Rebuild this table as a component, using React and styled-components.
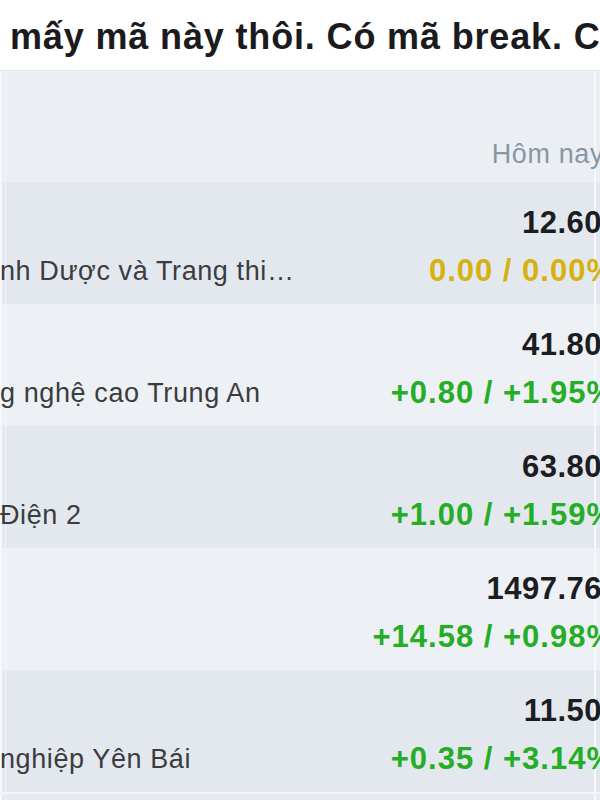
import React from "react";
import styled, { createGlobalStyle, css } from "styled-components";

const GlobalStyle = createGlobalStyle`
  html, body {
    margin: 0;
    padding: 0;
    background: #ffffff;
  }
  body {
    font-family: "Liberation Sans", Arial, Helvetica, sans-serif;
    -webkit-font-smoothing: antialiased;
  }
`;

const Frame = styled.div`
  width: 600px;
  height: 800px;
  overflow: hidden;
  background: #ffffff;
`;

const PostText = styled.div`
  height: 71px;
  box-sizing: border-box;
  display: flex;
  align-items: center;
  padding: 4px 0 0 10px;
  font-size: 36px;
  font-weight: 700;
  color: #1b1b1d;
  white-space: nowrap;
  letter-spacing: 0.85px;
  border-bottom: 1px solid #e2e6eb;
`;

const Table = styled.div`
  width: calc(100% + 16px);
  background: #e6ebf1;
`;

const edgeLines = css`
  background-image:
    linear-gradient(90deg, #f6f8fb 0 2px, transparent 2px 5px, #f1f4f8 5px 6px, transparent 6px),
    linear-gradient(270deg, transparent 0 20px, #f6f8fa 20px 22px, transparent 22px);
`;

const HeaderRow = styled.div`
  ${edgeLines};
  background-color: #ebeff4;
  height: 111px;
  box-sizing: border-box;
  display: flex;
  justify-content: flex-end;
  align-items: flex-end;
  padding: 0 12px 12px 0;
`;

const HeaderLabel = styled.span`
  font-size: 27px;
  line-height: 31px;
  letter-spacing: 0.6px;
  color: #8896a3;
  white-space: nowrap;
`;

const Row = styled.div`
  ${edgeLines};
  background-color: ${(p) => (p.$alt ? "#edf0f5" : "#e3e8ef")};
  height: 122px;
  box-sizing: border-box;
  display: grid;
  grid-template-columns: 1fr auto;
  grid-template-rows: 36px 36px;
  row-gap: 12px;
  padding-top: 23px;
`;

const Name = styled.div`
  grid-column: 1;
  grid-row: 2;
  align-self: center;
  font-size: 27px;
  line-height: 36px;
  letter-spacing: 0.6px;
  color: #3b3c3e;
  white-space: nowrap;
  overflow: hidden;
`;

const Price = styled.div`
  grid-column: 2;
  grid-row: 1;
  justify-self: end;
  font-size: 31px;
  line-height: 36px;
  font-weight: 700;
  letter-spacing: 0.5px;
  color: #1c1d20;
  white-space: nowrap;
  padding-right: 14px;
`;

const toneColor = {
  flat: "#d6b10f",
  up: "#25ad25",
  down: "#e03131",
};

const Change = styled.div`
  grid-column: 2;
  grid-row: 2;
  justify-self: end;
  font-size: 31px;
  line-height: 36px;
  font-weight: 700;
  letter-spacing: 1px;
  color: ${(p) => toneColor[p.$tone]};
  white-space: nowrap;
  padding-right: 1px;
`;

const BottomEdge = styled.div`
  ${edgeLines};
  background-color: #e6ebf1;
  border-top: 2px solid #f3f5f8;
  height: 10px;
`;

const rows = [
  { name: "nh Dược và Trang thi…", price: "12.60", change: "0.00 / 0.00%", tone: "flat" },
  { name: "g nghệ cao Trung An", price: "41.80", change: "+0.80 / +1.95%", tone: "up" },
  { name: "Điện 2", price: "63.80", change: "+1.00 / +1.59%", tone: "up" },
  { name: "", price: "1497.76", change: "+14.58 / +0.98%", tone: "up" },
  { name: "nghiệp Yên Bái", price: "11.50", change: "+0.35 / +3.14%", tone: "up" },
];

export default function App() {
  return (
    <Frame>
      <GlobalStyle />
      <PostText>mấy mã này thôi. Có mã break. Co thể vào</PostText>
      <Table>
        <HeaderRow>
          <HeaderLabel>Hôm nay</HeaderLabel>
        </HeaderRow>
        {rows.map((r, i) => (
          <Row key={i} $alt={i % 2 === 1}>
            <Price>{r.price}</Price>
            <Name>{r.name}</Name>
            <Change $tone={r.tone}>{r.change}</Change>
          </Row>
        ))}
        <BottomEdge />
      </Table>
    </Frame>
  );
}
